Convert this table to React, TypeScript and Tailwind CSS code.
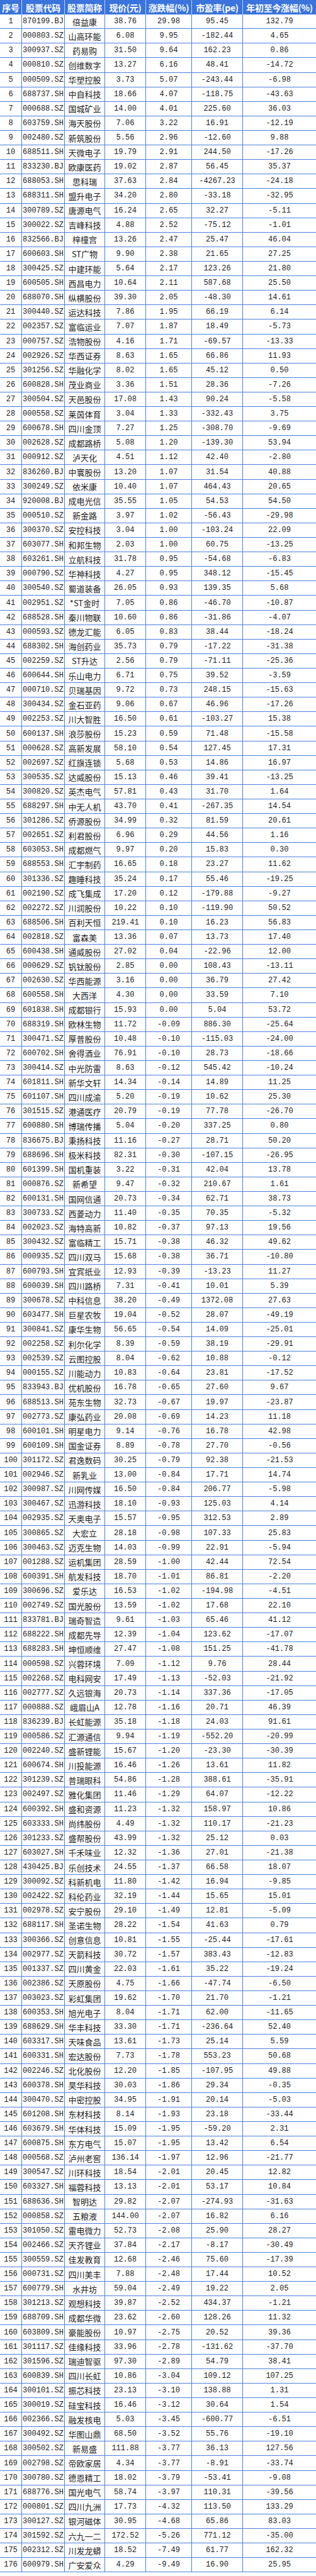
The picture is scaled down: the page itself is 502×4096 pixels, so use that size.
const raw = `1|870199.BJ|倍益康|38.76|29.98|95.45|132.79
2|000803.SZ|山高环能|6.08|9.95|-182.44|4.65
3|300937.SZ|药易购|31.50|9.64|162.23|0.86
4|000810.SZ|创维数字|13.27|6.16|48.41|-14.72
5|000509.SZ|华塑控股|3.73|5.07|-243.44|-6.98
6|688737.SH|中自科技|18.66|4.07|-118.75|-43.63
7|000688.SZ|国城矿业|14.00|4.01|225.60|36.03
8|603759.SH|海天股份|7.06|3.22|16.91|-12.19
9|002480.SZ|新筑股份|5.56|2.96|-12.60|9.88
10|688511.SH|天微电子|19.79|2.91|244.50|-17.26
11|833230.BJ|欧康医药|19.02|2.87|56.45|35.37
12|688053.SH|思科瑞|37.63|2.84|-4267.23|-24.18
13|688311.SH|盟升电子|34.20|2.80|-33.18|-32.95
14|300789.SZ|唐源电气|16.24|2.65|32.27|-5.11
15|300022.SZ|吉峰科技|4.88|2.52|-75.12|-1.01
16|832566.BJ|梓橦宫|13.26|2.47|25.47|46.04
17|600603.SH|ST广物|9.90|2.38|21.65|27.25
18|300425.SZ|中建环能|5.64|2.17|123.26|21.80
19|600505.SH|西昌电力|10.64|2.11|587.68|25.50
20|688070.SH|纵横股份|39.30|2.05|-48.30|14.61
21|300440.SZ|运达科技|7.86|1.95|66.19|6.14
22|002357.SZ|富临运业|7.07|1.87|18.49|-5.73
23|000757.SZ|浩物股份|4.16|1.71|-69.57|-13.33
24|002926.SZ|华西证券|8.63|1.65|66.86|11.93
25|301256.SZ|华融化学|8.02|1.65|45.12|0.50
26|600828.SH|茂业商业|3.36|1.51|28.36|-7.26
27|300504.SZ|天邑股份|17.08|1.43|90.24|-5.58
28|000558.SZ|莱茵体育|3.04|1.33|-332.43|3.75
29|600678.SH|四川金顶|7.27|1.25|-308.70|-9.69
30|002628.SZ|成都路桥|5.08|1.20|-139.30|53.94
31|000912.SZ|泸天化|4.51|1.12|42.40|-2.80
32|836260.BJ|中寰股份|13.20|1.07|31.54|40.88
33|300249.SZ|依米康|10.40|1.07|464.43|20.65
34|920008.BJ|成电光信|35.55|1.05|54.53|54.50
35|000510.SZ|新金路|3.97|1.02|-56.43|-29.98
36|300370.SZ|安控科技|3.04|1.00|-103.24|22.09
37|603077.SH|和邦生物|2.03|1.00|60.75|-13.25
38|603261.SH|立航科技|31.78|0.95|-54.68|-6.83
39|000790.SZ|华神科技|4.27|0.95|348.12|-15.45
40|300540.SZ|蜀道装备|26.05|0.93|139.35|5.68
41|002951.SZ|*ST金时|7.05|0.86|-46.70|-10.87
42|688528.SH|秦川物联|10.60|0.86|-31.86|-4.07
43|000593.SZ|德龙汇能|6.05|0.83|38.44|-18.24
44|688302.SH|海创药业|35.73|0.79|-17.22|-31.38
45|002259.SZ|ST升达|2.56|0.79|-71.11|-25.36
46|600644.SH|乐山电力|6.71|0.75|39.52|-3.59
47|000710.SZ|贝瑞基因|9.72|0.73|248.15|-15.63
48|300434.SZ|金石亚药|9.06|0.67|46.96|-17.26
49|002253.SZ|川大智胜|16.50|0.61|-103.27|15.38
50|600137.SH|浪莎股份|15.23|0.59|71.48|-15.58
51|000628.SZ|高新发展|58.10|0.54|127.45|17.31
52|002697.SZ|红旗连锁|5.68|0.53|14.86|16.97
53|300535.SZ|达威股份|15.13|0.46|39.41|-13.25
54|300820.SZ|英杰电气|57.81|0.43|31.70|1.64
55|688297.SH|中无人机|43.70|0.41|-267.35|14.54
56|301286.SZ|侨源股份|34.99|0.32|81.59|20.61
57|002651.SZ|利君股份|6.96|0.29|44.56|1.16
58|603053.SH|成都燃气|9.97|0.20|15.83|0.30
59|688553.SH|汇宇制药|16.65|0.18|23.27|11.62
60|301336.SZ|趣睡科技|35.24|0.17|55.46|-19.25
61|002190.SZ|成飞集成|17.20|0.12|-179.88|-9.27
62|002272.SZ|川润股份|10.22|0.10|-119.90|50.52
63|688506.SH|百利天恒|219.41|0.10|16.23|56.83
64|002818.SZ|富森美|13.36|0.07|13.73|17.40
65|600438.SH|通威股份|27.02|0.04|-22.96|12.00
66|000629.SZ|钒钛股份|2.85|0.00|108.43|-13.11
67|002630.SZ|华西能源|3.16|0.00|36.79|27.42
68|600558.SH|大西洋|4.30|0.00|33.59|7.10
69|601838.SH|成都银行|15.93|0.00|5.04|53.72
70|688319.SH|欧林生物|11.72|-0.09|886.30|-25.64
71|300471.SZ|厚普股份|10.48|-0.10|-115.03|-24.00
72|600702.SH|舍得酒业|76.91|-0.10|28.73|-18.66
73|300414.SZ|中光防雷|8.63|-0.12|545.42|-10.24
74|601811.SH|新华文轩|14.34|-0.14|14.89|11.25
75|601107.SH|四川成渝|5.20|-0.19|10.62|25.30
76|301515.SZ|港通医疗|20.79|-0.19|77.78|-26.70
77|600880.SH|博瑞传播|5.04|-0.20|337.25|0.80
78|836675.BJ|秉扬科技|11.16|-0.27|28.71|50.20
79|688696.SH|极米科技|82.31|-0.30|-107.15|-26.95
80|601399.SH|国机重装|3.22|-0.31|42.04|13.78
81|000876.SZ|新希望|9.47|-0.32|210.67|1.61
82|600131.SH|国网信通|20.73|-0.34|62.71|38.73
83|300733.SZ|西菱动力|11.40|-0.35|70.35|-5.32
84|002023.SZ|海特高新|10.82|-0.37|97.13|19.56
85|300432.SZ|富临精工|15.71|-0.38|46.32|49.62
86|000935.SZ|四川双马|15.68|-0.38|36.71|-10.80
87|600793.SH|宜宾纸业|12.93|-0.39|-13.23|11.27
88|600039.SH|四川路桥|7.31|-0.41|10.01|5.39
89|300678.SZ|中科信息|38.20|-0.49|1372.08|27.63
90|603477.SH|巨星农牧|19.04|-0.52|28.07|-49.19
91|300841.SZ|康华生物|56.65|-0.54|14.09|-25.01
92|002258.SZ|利尔化学|8.39|-0.59|38.19|-29.91
93|002539.SZ|云图控股|8.04|-0.62|10.88|-0.12
94|000155.SZ|川能动力|10.83|-0.64|23.81|-17.52
95|833943.BJ|优机股份|16.78|-0.65|27.60|9.67
96|688513.SH|苑东生物|32.73|-0.67|19.97|-23.87
97|002773.SZ|康弘药业|20.08|-0.69|14.23|11.18
98|600101.SH|明星电力|9.14|-0.76|16.78|42.98
99|600109.SH|国金证券|8.89|-0.78|27.70|-0.56
100|301172.SZ|君逸数码|30.25|-0.79|92.38|-21.53
101|002946.SZ|新乳业|13.00|-0.84|17.71|14.74
102|300987.SZ|川网传媒|16.50|-0.84|206.77|-5.98
103|300467.SZ|迅游科技|18.10|-0.93|125.03|4.14
104|002935.SZ|天奥电子|15.57|-0.95|312.53|2.89
105|300865.SZ|大宏立|28.18|-0.98|107.33|25.83
106|300463.SZ|迈克生物|14.03|-0.99|22.91|-5.94
107|001288.SZ|运机集团|28.59|-1.00|42.44|72.54
108|600391.SH|航发科技|18.70|-1.01|86.81|-2.20
109|300696.SZ|爱乐达|16.53|-1.02|-194.98|-4.51
110|002749.SZ|国光股份|13.59|-1.02|17.68|22.10
111|833781.BJ|瑞奇智造|9.61|-1.03|65.46|41.12
112|688222.SH|成都先导|12.39|-1.04|123.62|-17.07
113|688283.SH|坤恒顺维|27.47|-1.08|151.25|-41.78
114|000598.SZ|兴蓉环境|7.09|-1.12|9.76|28.44
115|002268.SZ|电科网安|17.49|-1.13|-52.03|-21.92
116|002777.SZ|久远银海|20.73|-1.14|337.36|-17.05
117|000888.SZ|峨眉山A|12.78|-1.16|20.71|46.39
118|836239.BJ|长虹能源|35.18|-1.18|24.03|91.61
119|000586.SZ|汇源通信|9.94|-1.19|-552.20|-20.99
120|002240.SZ|盛新锂能|15.67|-1.20|-23.30|-30.39
121|600674.SH|川投能源|16.46|-1.26|13.61|11.82
122|301239.SZ|普瑞眼科|54.86|-1.28|388.61|-35.91
123|002497.SZ|雅化集团|11.46|-1.29|64.07|-12.22
124|600392.SH|盛和资源|11.23|-1.32|158.97|10.86
125|603333.SH|尚纬股份|4.49|-1.32|110.17|-21.23
126|301233.SZ|盛帮股份|43.99|-1.32|25.12|0.03
127|603027.SH|千禾味业|12.32|-1.36|27.01|-21.38
128|430425.BJ|乐创技术|24.55|-1.37|66.58|18.07
129|300092.SZ|科新机电|11.80|-1.42|16.94|-9.85
130|002422.SZ|科伦药业|32.19|-1.44|15.65|15.01
131|002978.SZ|安宁股份|29.10|-1.49|12.81|-5.09
132|688117.SH|圣诺生物|28.22|-1.54|41.63|0.79
133|300366.SZ|创意信息|10.81|-1.55|-25.44|-17.61
134|002977.SZ|天箭科技|30.72|-1.57|383.43|-12.83
135|001337.SZ|四川黄金|22.03|-1.61|35.22|-19.24
136|002386.SZ|天原股份|4.75|-1.66|-47.74|-6.50
137|003023.SZ|彩虹集团|19.62|-1.70|21.70|-1.21
138|600353.SH|旭光电子|8.04|-1.71|62.00|-11.65
139|688629.SH|华丰科技|33.30|-1.71|-236.64|52.40
140|603317.SH|天味食品|13.61|-1.73|25.14|5.59
141|600331.SH|宏达股份|7.73|-1.78|553.23|50.68
142|002246.SZ|北化股份|12.20|-1.85|-107.95|49.88
143|600378.SH|昊华科技|30.03|-1.86|29.34|-0.35
144|300470.SZ|中密控股|34.95|-1.91|20.14|-5.03
145|601208.SH|东材科技|8.14|-1.93|23.18|-33.44
146|603679.SH|华体科技|15.09|-1.95|-59.20|2.31
147|600875.SH|东方电气|15.07|-1.95|13.42|6.54
148|000568.SZ|泸州老窖|136.14|-1.97|12.96|-21.77
149|300547.SZ|川环科技|18.54|-2.01|20.45|12.82
150|603327.SH|福蓉科技|13.13|-2.01|53.17|10.84
151|688636.SH|智明达|29.82|-2.07|-274.93|-31.63
152|000858.SZ|五粮液|144.00|-2.07|16.82|6.16
153|301050.SZ|雷电微力|52.73|-2.08|25.90|28.27
154|002466.SZ|天齐锂业|37.84|-2.17|-8.17|-30.49
155|300559.SZ|佳发教育|12.68|-2.46|75.60|-17.39
156|000731.SZ|四川美丰|7.88|-2.48|17.44|10.52
157|600779.SH|水井坊|59.04|-2.49|19.22|2.05
158|301213.SZ|观想科技|39.87|-2.52|434.37|-1.21
159|688709.SH|成都华微|23.62|-2.60|128.26|11.32
160|603809.SH|豪能股份|10.97|-2.75|20.52|39.36
161|301117.SZ|佳缘科技|33.96|-2.78|-131.62|-37.70
162|301596.SZ|瑞迪智驱|97.30|-2.89|54.79|38.41
163|600839.SH|四川长虹|10.86|-3.04|109.12|107.25
164|300101.SZ|振芯科技|23.13|-3.10|138.88|1.31
165|300019.SZ|硅宝科技|16.46|-3.12|30.64|1.54
166|002366.SZ|融发核电|5.03|-3.45|-600.77|-6.51
167|300492.SZ|华图山鼎|68.50|-3.52|55.76|-19.10
168|300502.SZ|新易盛|111.88|-3.77|36.13|127.56
169|002798.SZ|帝欧家居|4.34|-3.77|-8.91|-33.74
170|300780.SZ|德恩精工|18.02|-3.79|-53.41|-9.08
171|688776.SH|国光电气|58.74|-3.97|110.31|-39.56
172|000801.SZ|四川九洲|17.73|-4.32|113.50|133.29
173|300127.SZ|银河磁体|30.95|-4.68|65.86|83.03
174|301592.SZ|六九一二|172.52|-5.26|771.12|-35.00
175|002312.SZ|川发龙蟒|18.52|-7.49|61.77|162.32
176|600979.SH|广安爱众|4.29|-9.49|16.90|25.95`;

const rows = raw.split('\n').map((line) => line.split('|'));

const headers = ['序号', '股票代码', '股票简称', '现价(元)', '涨跌幅(%)', '市盈率(pe)', '年初至今涨幅(%)'];

const cols = 'grid grid-cols-[35px_68px_64px_65px_73px_81px_1fr]';

export default function App() {
  return (
    <div className="w-[502px] bg-white font-['Liberation_Mono','Noto_Sans_CJK_SC',monospace] text-[#1c1c1c]">
      {/* Header */}
      <div className={`${cols} h-[23.1px] bg-[#3a74dc] text-white`}>
        {headers.map((h, i) => (
          <div
            key={h}
            className={`flex items-center justify-center font-['Noto_Sans_CJK_SC',sans-serif] text-[14px] font-bold leading-none tracking-[-0.3px] whitespace-nowrap ${
              i < headers.length - 1 ? 'border-r border-[#b9cff3]' : ''
            }`}
          >
            {h}
          </div>
        ))}
      </div>

      {/* Rows */}
      {rows.map((r) => (
        <div key={r[0]} className={`${cols} h-[23.11px] border-b border-[#4b80dd]`}>
          {r.map((cell, i) => (
            <div
              key={i}
              className={`flex items-center justify-center whitespace-nowrap leading-none ${
                i === 2
                  ? "font-['Noto_Sans_CJK_SC',sans-serif] text-[13px]"
                  : 'text-[12px]'
              } ${i < r.length - 1 ? 'border-r border-[#4b80dd]' : ''}`}
            >
              {cell}
            </div>
          ))}
        </div>
      ))}
    </div>
  );
}
